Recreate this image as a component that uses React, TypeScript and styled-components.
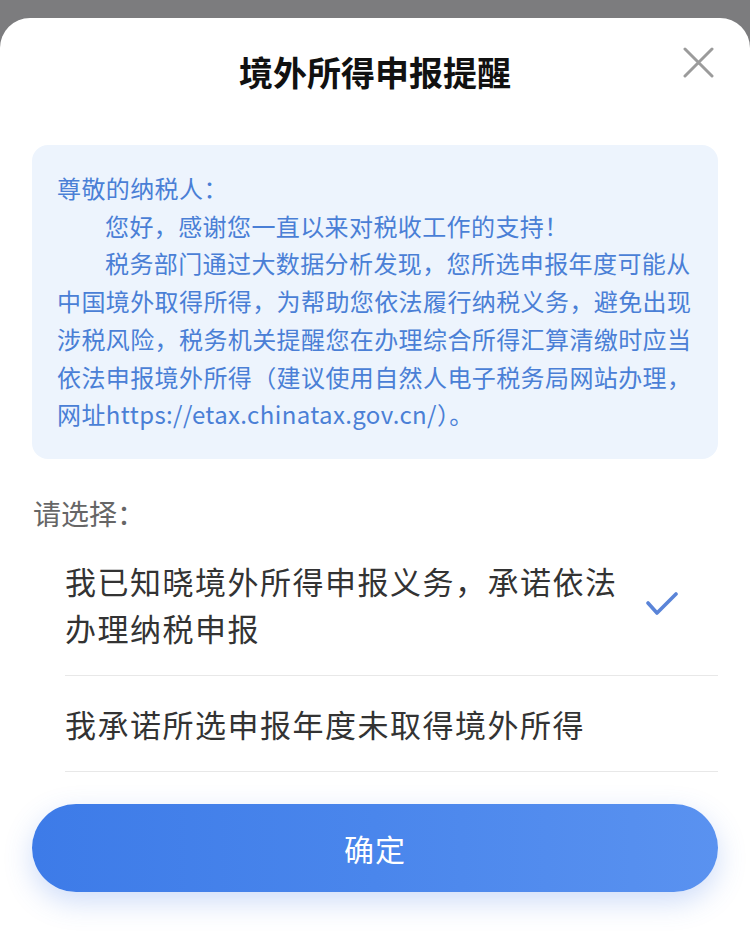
import React, { ReactElement } from 'react'
import styled, { createGlobalStyle } from 'styled-components'

const GlobalStyle = createGlobalStyle`
  html, body {
    margin: 0;
    padding: 0;
    background: #7c7c7e;
    font-family: "Noto Sans CJK SC", "Noto Sans", sans-serif;
  }
  * { box-sizing: border-box; }
`

const Page = styled.div`
  height: 932px;
  padding-top: 18px;
  overflow: hidden;
`

const Sheet = styled.div`
  height: 914px;
  background: #fff;
  border-radius: 30px 30px 0 0;
  display: flex;
  flex-direction: column;
`

const Header = styled.div`
  position: relative;
  height: 108px;
  display: flex;
  align-items: center;
  justify-content: center;
`

const Title = styled.h1`
  margin: 0;
  font-size: 34px;
  line-height: 44px;
  font-weight: 700;
  color: #111;
`

const CloseButton = styled.button`
  position: absolute;
  top: 29px;
  right: 36px;
  width: 31px;
  height: 31px;
  padding: 0;
  border: none;
  background: none;
  display: flex;
  align-items: center;
  justify-content: center;
`

const Notice = styled.div`
  margin: 19px 32px 0;
  padding: 24px 25px 26px;
  background: #edf4fd;
  border-radius: 16px;
  color: #4a7fd6;
  font-size: 24px;
  letter-spacing: 0.4px;
  line-height: 37.7px;
`

const Para = styled.p<{ $indent?: boolean }>`
  margin: 0;
  text-indent: ${p => (p.$indent ? '48px' : '0')};
`

const Prompt = styled.div`
  margin-top: 34px;
  padding-left: 33px;
  font-size: 28px;
  line-height: 40px;
  color: #666;
`

const OptionList = styled.div`
  margin: 0 32px 0 65px;
`

const OptionRow = styled.div`
  display: flex;
  align-items: center;
  justify-content: space-between;
  padding: 24px 40px 24px 0;
  border-bottom: 1px solid #e8e8e8;
`

const OptionText = styled.div`
  max-width: 560px;
  font-size: 31px;
  letter-spacing: 1.5px;
  line-height: 47px;
  color: #333;
`

const ConfirmButton = styled.button`
  margin: 32px 32px 0;
  height: 88px;
  border: none;
  border-radius: 44px;
  background: linear-gradient(90deg, #3d7be8 0%, #4a86ec 50%, #5a92f0 100%);
  box-shadow: 0 10px 28px rgba(64, 120, 230, 0.25);
  color: #fff;
  font-family: inherit;
  font-size: 30px;
  letter-spacing: 1px;
`

function CloseIcon(): ReactElement {
  return (
    <svg width='31' height='31' viewBox='0 0 31 31'>
      <path d='M2 2 L29 29 M29 2 L2 29' stroke='#9b9b9b' strokeWidth='3' strokeLinecap='round' />
    </svg>
  )
}

function CheckIcon(): ReactElement {
  return (
    <svg width='32' height='24' viewBox='0 0 32 24'>
      <path d='M2 11 L11 21 L30 2' fill='none' stroke='#5a84d8' strokeWidth='3.6' strokeLinecap='round' strokeLinejoin='round' />
    </svg>
  )
}

const options = [
  { text: '我已知晓境外所得申报义务，承诺依法办理纳税申报', checked: true },
  { text: '我承诺所选申报年度未取得境外所得', checked: false },
]

export default function App(): ReactElement {
  return (
    <Page>
      <GlobalStyle />
      <Sheet>
        <Header>
          <Title>境外所得申报提醒</Title>
          <CloseButton aria-label='关闭'>
            <CloseIcon />
          </CloseButton>
        </Header>
        <Notice>
          <Para>尊敬的纳税人：</Para>
          <Para $indent>您好，感谢您一直以来对税收工作的支持！</Para>
          <Para $indent>
            税务部门通过大数据分析发现，您所选申报年度可能从中国境外取得所得，为帮助您依法履行纳税义务，避免出现涉税风险，税务机关提醒您在办理综合所得汇算清缴时应当依法申报境外所得（建议使用自然人电子税务局网站办理，网址https://etax.chinatax.gov.cn/）。
          </Para>
        </Notice>
        <Prompt>请选择：</Prompt>
        <OptionList>
          {options.map(o => (
            <OptionRow key={o.text}>
              <OptionText>{o.text}</OptionText>
              {o.checked && <CheckIcon />}
            </OptionRow>
          ))}
        </OptionList>
        <ConfirmButton>确定</ConfirmButton>
      </Sheet>
    </Page>
  )
}
